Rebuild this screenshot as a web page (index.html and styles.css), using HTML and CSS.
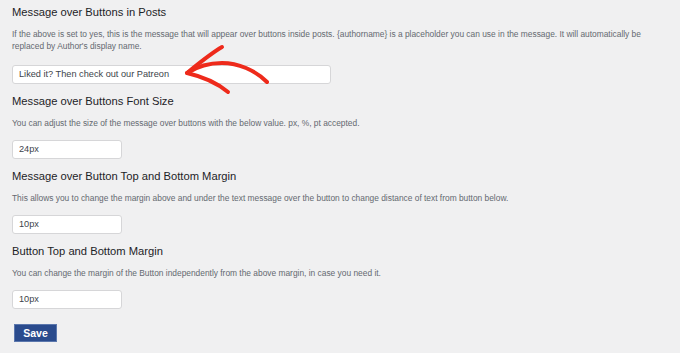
FILE: index.html
```html
<!DOCTYPE html>
<html>
<head>
<meta charset="utf-8">
<link rel="stylesheet" href="styles.css">
</head>
<body>
<div class="page">
  <section class="field">
    <h3 class="title">Message over Buttons in Posts</h3>
    <p class="desc">If the above is set to yes, this is the message that will appear over buttons inside posts. {authorname} is a placeholder you can use in the message. It will automatically be replaced by Author's display name.</p>
    <div class="wide-wrap">
      <input class="input wide" type="text" value="Liked it? Then check out our Patreon">
      <svg class="arrow" width="110" height="60" viewBox="0 0 110 60">
        <path d="M17 33 C 28 26, 40 23, 52 23 C 68 23, 85 30, 97 42" fill="none" stroke="#ee2a1b" stroke-width="4" stroke-linecap="round"/>
        <path d="M52 7 C 40 14, 28 24, 17 33 C 30 36, 46 42, 58 52" fill="none" stroke="#ee2a1b" stroke-width="4" stroke-linecap="round" stroke-linejoin="round"/>
      </svg>
    </div>
  </section>
  <section class="field">
    <h3 class="title">Message over Buttons Font Size</h3>
    <p class="desc">You can adjust the size of the message over buttons with the below value. px, %, pt accepted.</p>
    <input class="input small" type="text" value="24px">
  </section>
  <section class="field">
    <h3 class="title">Message over Button Top and Bottom Margin</h3>
    <p class="desc">This allows you to change the margin above and under the text message over the button to change distance of text from button below.</p>
    <input class="input small" type="text" value="10px">
  </section>
  <section class="field">
    <h3 class="title">Button Top and Bottom Margin</h3>
    <p class="desc">You can change the margin of the Button independently from the above margin, in case you need it.</p>
    <input class="input small" type="text" value="10px">
  </section>
  <button class="save" type="button">Save</button>
</div>
</body>
</html>
```

FILE: styles.css
```css
html, body {
  margin: 0;
  padding: 0;
  background: #f0f0f1;
}
.page {
  padding: 5px 12px 0 12px;
  font-family: "Liberation Sans", Arial, sans-serif;
  color: #1d2327;
  display: flex;
  flex-direction: column;
  align-items: flex-start;
}
.field {
  display: flex;
  flex-direction: column;
  align-items: flex-start;
  margin-bottom: 10px;
  width: 100%;
}
.title {
  margin: 0;
  font-size: 11.2px;
  font-weight: normal;
  line-height: 14px;
  color: #1d2327;
}
.desc {
  margin: 9px 0 0 0;
  font-size: 8.4px;
  line-height: 12px;
  color: #646970;
}
.input {
  box-sizing: border-box;
  height: 19px;
  margin-top: 11px;
  padding: 0 6px;
  background: #fff;
  border: 1px solid #d6d6d8;
  border-radius: 3px;
  font-family: "Liberation Sans", Arial, sans-serif;
  font-size: 9.2px;
  color: #3c434a;
  outline: none;
}
.wide-wrap {
  position: relative;
  margin-top: 11px;
}
.wide-wrap .input {
  margin-top: 0;
}
.wide {
  width: 319px;
}
.small {
  width: 110px;
}
.arrow {
  position: absolute;
  left: 158px;
  top: -23px;
}
.save {
  margin: 5px 0 0 2px;
  width: 43px;
  height: 18px;
  padding: 0;
  background: #2a4b8d;
  border: 1px solid #5b77ad;
  border-radius: 0;
  color: #fff;
  font-family: "Liberation Sans", Arial, sans-serif;
  font-weight: bold;
  font-size: 10.5px;
}
```
